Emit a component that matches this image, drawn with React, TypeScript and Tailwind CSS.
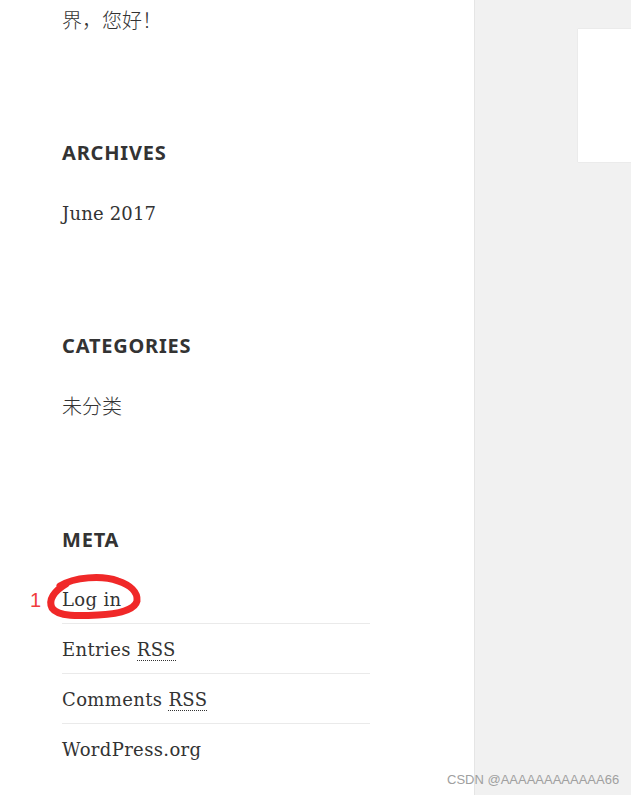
import React from 'react';

const serif = "font-['DejaVu_Serif','Noto_Sans_CJK_SC',serif]";
const sans = "font-['Noto_Sans',sans-serif]";
const cjk = "font-['Noto_Sans_CJK_SC',sans-serif]";

const WidgetTitle = ({ children, className = '' }: { children: React.ReactNode; className?: string }) => (
  <h2 className={`${sans} text-[20px] leading-[24px] font-bold uppercase tracking-[0.04em] text-[#333] ${className}`}>
    {children}
  </h2>
);

const Abbr = ({ children }: { children: React.ReactNode }) => (
  <abbr className="no-underline border-b border-dotted border-[#333]">{children}</abbr>
);

export default function App() {
  const meta: React.ReactNode[] = [
    'Log in',
    <>Entries <Abbr>RSS</Abbr></>,
    <>Comments <Abbr>RSS</Abbr></>,
    'WordPress.org',
  ];

  return (
    <div className="relative flex w-[631px] h-[795px] overflow-hidden bg-[#f1f1f1]">
      {/* Sidebar */}
      <aside className={`w-[475px] h-full bg-white border-r border-[#e5e5e5] pl-[62px] text-[#333] ${serif}`}>
        <div className={`text-[20px] leading-[40px] font-light ${cjk}`}>界，您好！</div>

        <WidgetTitle className="mt-[101px]">Archives</WidgetTitle>
        <div className="mt-[34px] text-[18px] tracking-[0.01em] leading-[30px]">June 2017</div>

        <WidgetTitle className="mt-[105px]">Categories</WidgetTitle>
        <div className={`mt-[33px] text-[20px] leading-[30px] font-light ${cjk}`}>未分类</div>

        <WidgetTitle className="mt-[107px]">Meta</WidgetTitle>
        <ul className="mt-[22px] w-[308px]">
          {meta.map((m, i) => (
            <li
              key={i}
              className={`pt-[11px] pb-[8px] text-[18px] tracking-[0.02em] leading-[30px] ${i < meta.length - 1 ? 'border-b border-[#eaeaea]' : ''}`}
            >
              {m}
            </li>
          ))}
        </ul>
      </aside>

      {/* Content area */}
      <main className="flex-1 pt-[29px] pl-[103px]">
        <div className="h-[133px] bg-white shadow-[0_0_1px_rgba(0,0,0,0.15)]" />
      </main>

      {/* Annotation */}
      <span className="absolute left-[30px] top-[588px] text-[20px] leading-[24px] text-[#f03c3c] font-['Liberation_Sans',sans-serif]">
        1
      </span>
      <svg className="absolute left-[44px] top-[572px]" width="100" height="52" viewBox="0 0 100 52" fill="none">
        <path
          d="M16 14 C30 5 58 3 74 9 C86 13 94 20 93 29 C91 38 74 42 54 43 C36 44 14 45 8 36 C4 28 10 19 22 12"
          stroke="#f02828"
          strokeWidth="7"
          strokeLinecap="round"
          strokeLinejoin="round"
        />
      </svg>

      {/* Watermark */}
      <span className="absolute left-[447px] top-[772px] whitespace-nowrap text-[13px] leading-[16px] text-[#a0a0a0] font-['Liberation_Sans',sans-serif]">
        CSDN @AAAAAAAAAAAA66
      </span>
    </div>
  );
}
